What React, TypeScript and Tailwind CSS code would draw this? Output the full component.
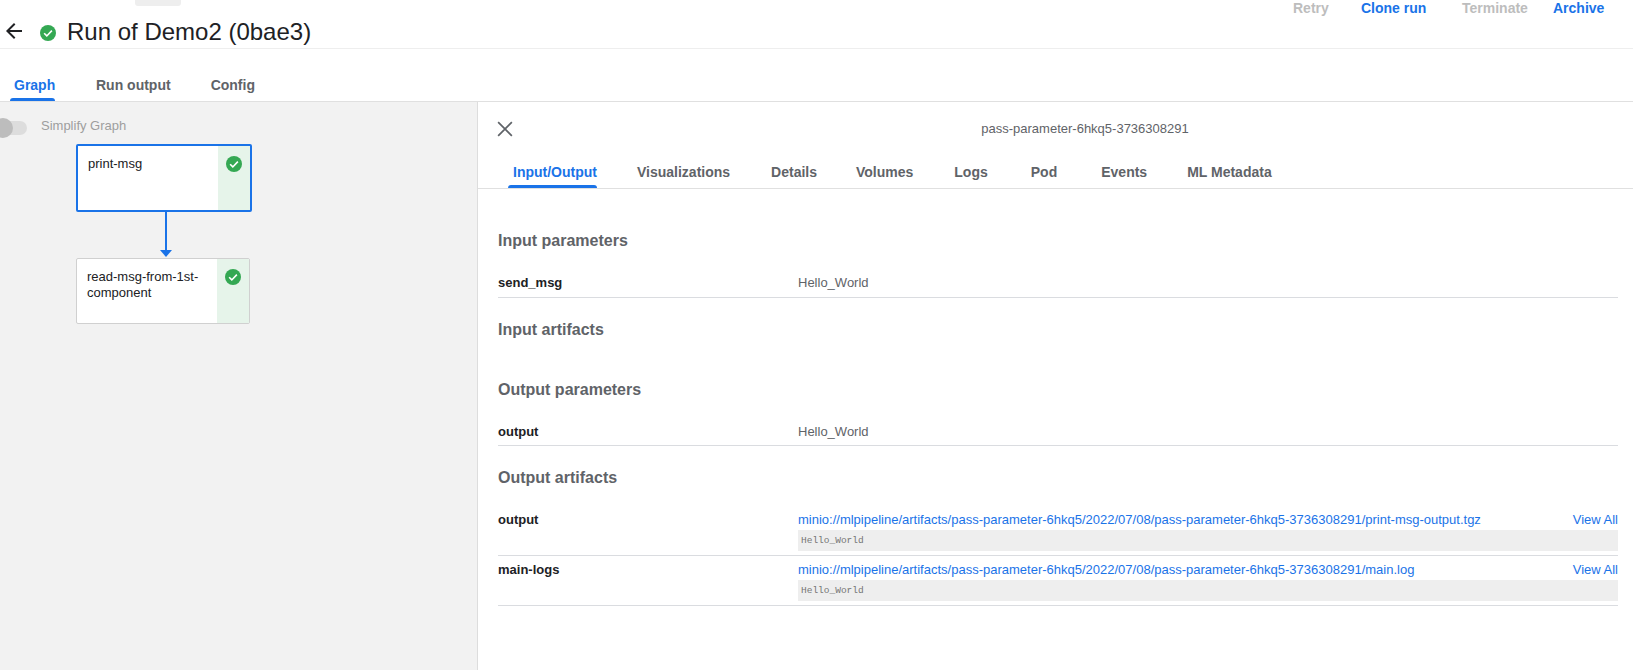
const Check = ({ size = 16 }: { size?: number }) => (
  <svg width={size} height={size} viewBox="0 0 24 24" className="shrink-0">
    <circle cx="12" cy="12" r="12" fill="#34a853" />
    <path d="M6.2 12.4l4 4 7.6-8" fill="none" stroke="#fff" strokeWidth="2.4" />
  </svg>
);

const Node = ({ label, selected }: { label: string; selected?: boolean }) => (
  <div
    className={
      selected
        ? "absolute left-[76px] top-[42px] flex h-[68px] w-[176px] overflow-hidden rounded-[2px] border-2 border-[#1a73e8] bg-white"
        : "absolute left-[76px] top-[156px] flex h-[66px] w-[174px] overflow-hidden rounded-[2px] border border-[#d0d0d0] bg-white"
    }
  >
    <div className={selected ? "flex-1 pl-[10px] pt-[10px] text-[13px] leading-4 text-[#202124]" : "flex-1 pl-[10px] pt-[10px] pr-2 text-[13px] leading-4 text-[#202124]"}>
      {label}
    </div>
    <div className="flex w-[32px] justify-center bg-[#e6f4ea] pt-[10px]">
      <Check />
    </div>
  </div>
);

const Tab = ({ label, active, cls }: { label: string; active?: boolean; cls: string }) => (
  <div className={`relative ${cls} text-[14px] font-bold leading-5 ${active ? "text-[#1a73e8]" : "text-[#5f6368]"}`}>
    {label}
    {active && <div className="absolute bottom-0 left-0 right-0 h-[3px] rounded-t-[3px] bg-[#1a73e8]" />}
  </div>
);

const Heading = ({ children, cls }: { children: string; cls: string }) => (
  <div className={`${cls} flex items-center text-[16px] font-bold leading-5 text-[#5f6368]`}>{children}</div>
);

const ParamRow = ({ name, value, cls }: { name: string; value: string; cls: string }) => (
  <div className={`flex items-start border-b border-[#dadce0] text-[13px] leading-5 ${cls}`}>
    <div className="w-[300px] font-bold text-[#202124]">{name}</div>
    <div className="text-[#5f6368]">{value}</div>
  </div>
);

const ArtifactRow = ({ name, path }: { name: string; path: string }) => (
  <div className="flex h-[50px] items-start border-b border-[#dadce0] pt-[4px] text-[13px]">
    <div className="w-[300px] font-bold leading-5 text-[#202124]">{name}</div>
    <div className="flex-1">
      <div className="flex h-5 items-center justify-between leading-5 text-[#1a73e8]">
        <span>{path}</span>
        <span>View All</span>
      </div>
      <div className="flex h-[21px] items-center bg-[#eeeeee] pl-[3px] pt-[2px] font-['Liberation_Mono',monospace] text-[9.5px] text-[#757575]">
        Hello_World
      </div>
    </div>
  </div>
);

export default function App() {
  const base = "minio://mlpipeline/artifacts/pass-parameter-6hkq5/2022/07/08/pass-parameter-6hkq5-3736308291/";
  return (
    <div className="flex h-[670px] w-[1633px] flex-col overflow-hidden bg-white font-['Liberation_Sans',Arial,sans-serif]">
      <div className="relative flex h-[49px] shrink-0 items-center border-b border-[#eeeeee] pt-[14px]">
        <div className="absolute left-[135px] top-0 h-[6px] w-[46px] rounded-b-[3px] bg-[#eeeeee]" />
        <svg width="24" height="24" viewBox="0 0 24 24" className="ml-[2px]">
          <path d="M20 11H7.83l5.59-5.59L12 4l-8 8 8 8 1.41-1.41L7.83 13H20v-2z" fill="#202124" />
        </svg>
        <div className="ml-[14px] mt-[3px]">
          <Check />
        </div>
        <div className="ml-[11px] mt-[1px] text-[24px] leading-7 text-[#202124]">Run of Demo2 (0bae3)</div>
        <div className="absolute left-[1293px] top-0 text-[14px] font-bold leading-4 text-[#bdbdbd]">Retry</div>
        <div className="absolute left-[1361px] top-0 text-[14px] font-bold leading-4 text-[#1a73e8]">Clone run</div>
        <div className="absolute left-[1462px] top-0 text-[14px] font-bold leading-4 text-[#bdbdbd]">Terminate</div>
        <div className="absolute left-[1553px] top-0 text-[14px] font-bold leading-4 text-[#1a73e8]">Archive</div>
      </div>

      <div className="flex h-[53px] shrink-0 items-end border-b border-[#e0e0e0] pl-[10px]">
        <Tab label="Graph" active cls="w-[45px] h-[26px] pl-[4px]" />
        <Tab label="Run output" cls="ml-[41px] h-[26px]" />
        <Tab label="Config" cls="ml-[40px] h-[26px]" />
      </div>

      <div className="flex min-h-0 flex-1">
        <div className="relative w-[478px] shrink-0 border-r border-[#dddddd] bg-[#f2f2f2]">
          <div className="flex h-[47px] items-start pt-[14px]">
            <div className="relative ml-0 mt-[5px] h-[14px] w-[27px] rounded-r-[7px] bg-[#dddddd]">
              <div className="absolute -left-[7px] -top-[3px] h-5 w-5 rounded-full bg-[#bdbdbd]" />
            </div>
            <div className="ml-[14px] text-[13px] leading-5 text-[#9e9e9e]">Simplify Graph</div>
          </div>
          <Node label="print-msg" selected />
          <div className="absolute left-[165px] top-[110px] h-[38px] w-[2px] bg-[#1a73e8]" />
          <svg width="12" height="8" viewBox="0 0 12 8" className="absolute left-[160px] top-[148px]">
            <path d="M0 0h12L6 7z" fill="#1a73e8" />
          </svg>
          <Node label="read-msg-from-1st-component" />
        </div>

        <div className="flex min-w-0 flex-1 flex-col bg-white">
          <div className="relative flex h-[51px] shrink-0 items-center justify-center pl-[59px] text-[13px] text-[#5f6368]">
            <svg width="16" height="16" viewBox="0 0 14 14" className="absolute left-[19px] top-[19px]">
              <path d="M1 1l12 12M13 1L1 13" stroke="#5f6368" strokeWidth="1.5" fill="none" />
            </svg>
            <span className="mt-[2px]">pass-parameter-6hkq5-3736308291</span>
          </div>
          <div className="flex h-[36px] shrink-0 items-start border-b border-[#e0e0e0] pl-[31px]">
            <Tab label="Input/Output" active cls="-ml-[1px] pl-[5px] h-[35px] pt-[9px]" />
            <Tab label="Visualizations" cls="ml-[40px] h-[35px] pt-[9px]" />
            <Tab label="Details" cls="ml-[41px] h-[35px] pt-[9px]" />
            <Tab label="Volumes" cls="ml-[39px] h-[35px] pt-[9px]" />
            <Tab label="Logs" cls="ml-[41px] h-[35px] pt-[9px]" />
            <Tab label="Pod" cls="ml-[43px] h-[35px] pt-[9px]" />
            <Tab label="Events" cls="ml-[44px] h-[35px] pt-[9px]" />
            <Tab label="ML Metadata" cls="ml-[40px] h-[35px] pt-[9px]" />
          </div>
          <div className="flex-1 pl-[20px] pr-[15px]">
            <Heading cls="mt-[38px] h-[28px]">Input parameters</Heading>
            <div className="mt-[13px]">
              <ParamRow name="send_msg" value="Hello_World" cls="h-[30px] pt-[5px]" />
            </div>
            <Heading cls="mt-[18px] h-[28px]">Input artifacts</Heading>
            <Heading cls="mt-[32px] h-[28px]">Output parameters</Heading>
            <div className="mt-[14px]">
              <ParamRow name="output" value="Hello_World" cls="h-[28px] pt-[4px]" />
            </div>
            <Heading cls="mt-[18px] h-[28px]">Output artifacts</Heading>
            <div className="mt-[14px]">
              <ArtifactRow name="output" path={base + "print-msg-output.tgz"} />
              <ArtifactRow name="main-logs" path={base + "main.log"} />
            </div>
          </div>
        </div>
      </div>
    </div>
  );
}
